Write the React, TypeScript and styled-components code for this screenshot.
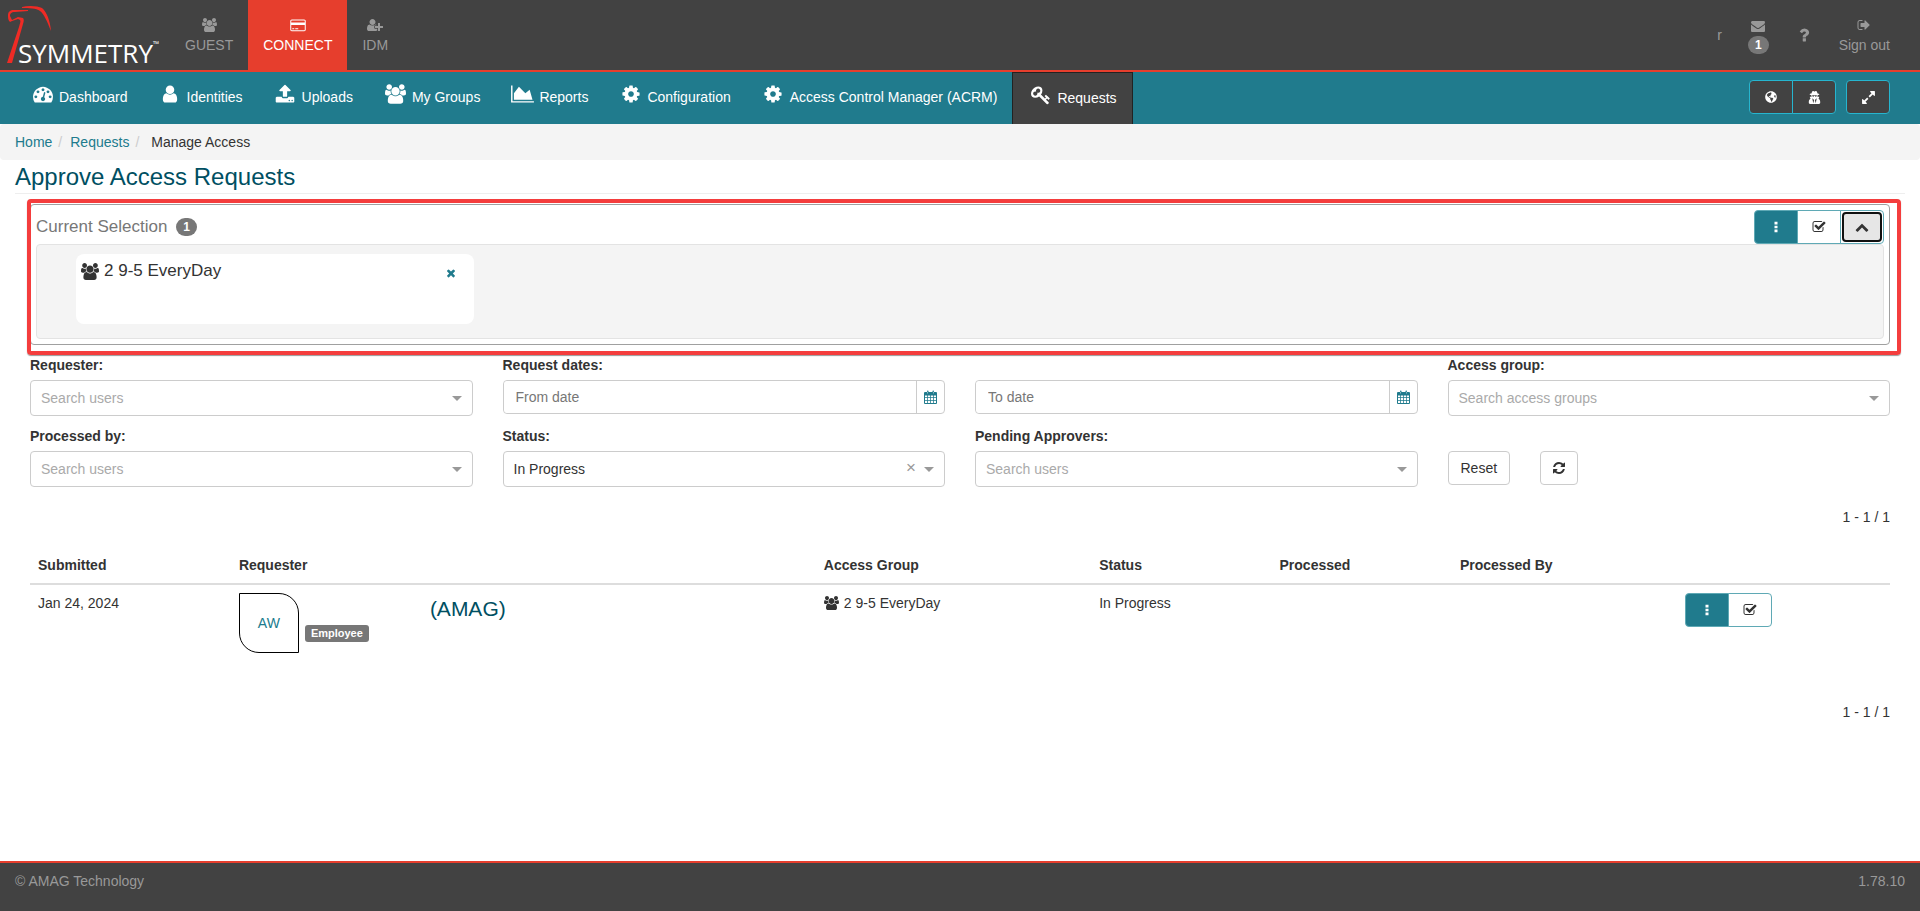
import React from "react";
import styled, { createGlobalStyle, css } from "styled-components";
import { FaUserSecret, FaGlobeAmericas } from "react-icons/fa";

const color = {
  dark: "#424242",
  teal: "#207b8d",
  tealLine: "#26b5cf",
  heading: "#004f62",
  red: "#e63e2d",
  text: "#333333",
  muted: "#999999",
  badge: "#777777",
  line: "#cccccc",
  pale: "#f4f4f4",
};

const GlobalStyle = createGlobalStyle`
  *, *::before, *::after { box-sizing: border-box; }
  body { margin: 0; background: #fff; }
  body, button, input, select { font-family: "Liberation Sans", Arial, sans-serif; font-size: 14px; line-height: 20px; color: ${color.text}; }
  a { color: ${color.teal}; text-decoration: none; }
`;

/* ---------- icons ---------- */

const glyphs = {
  users: [1920, "M593 896q-162 5-265 128h-134q-82 0-138-40.5t-56-118.5q0-353 124-353 6 0 43.5 21t97.5 42.5 119 21.5q67 0 133-23-5 37-5 66 0 139 81 256zm1071 637q0 120-73 189.5t-194 69.5h-874q-121 0-194-69.5t-73-189.5q0-53 3.5-103.5t14-109 26.5-108.5 43-97.5 62-81 85.5-53.5 111.5-20q10 0 43 21.5t73 48 107 48 135 21.5 135-21.5 107-48 73-48 43-21.5q61 0 111.5 20t85.5 53.5 62 81 43 97.5 26.5 108.5 14 109 3.5 103.5zm-1024-1277q0 106-75 181t-181 75-181-75-75-181 75-181 181-75 181 75 75 181zm704 384q0 159-112.5 271.5t-271.5 112.5-271.5-112.5-112.5-271.5 112.5-271.5 271.5-112.5 271.5 112.5 112.5 271.5zm576 225q0 78-56 118.5t-138 40.5h-134q-103-123-265-128 81-117 81-256 0-29-5-66 66 23 133 23 59 0 119-21.5t97.5-42.5 43.5-21q124 0 124 353zm-128-609q0 106-75 181t-181 75-181-75-75-181 75-181 181-75 181 75 75 181z"],
  gauge: [1792, "M384 1152q0-53-37.5-90.5t-90.5-37.5-90.5 37.5-37.5 90.5 37.5 90.5 90.5 37.5 90.5-37.5 37.5-90.5zm192-448q0-53-37.5-90.5t-90.5-37.5-90.5 37.5-37.5 90.5 37.5 90.5 90.5 37.5 90.5-37.5 37.5-90.5zm428 481l101-382q6-26-7.5-48.5t-38.5-29.5-48 6.5-30 39.5l-101 382q-60 5-107 43.5t-63 98.5q-20 77 20 146t117 89 146-20 89-117q16-60-6-117t-72-91zm660-33q0-53-37.5-90.5t-90.5-37.5-90.5 37.5-37.5 90.5 37.5 90.5 90.5 37.5 90.5-37.5 37.5-90.5zm-640-640q0-53-37.5-90.5t-90.5-37.5-90.5 37.5-37.5 90.5 37.5 90.5 90.5 37.5 90.5-37.5 37.5-90.5zm448 192q0-53-37.5-90.5t-90.5-37.5-90.5 37.5-37.5 90.5 37.5 90.5 90.5 37.5 90.5-37.5 37.5-90.5zm320 448q0 261-141 483-19 29-54 29h-1402q-35 0-54-29-141-221-141-483 0-182 71-348t191-286 286-191 348-71 348 71 286 191 191 286 71 348z"],
  user: [1792, "M1536 1399q0 109-62.5 187t-150.5 78h-854q-88 0-150.5-78t-62.5-187q0-85 8.5-160.5t31.5-152 58.5-131 94-89 134.5-34.5q131 128 313 128t313-128q76 0 134.5 34.5t94 89 58.5 131 31.5 152 8.5 160.5zm-256-887q0 159-112.5 271.5t-271.5 112.5-271.5-112.5-112.5-271.5 112.5-271.5 271.5-112.5 271.5 112.5 112.5 271.5z"],
  userPlus: [2048, "M704 896q-159 0-271.500-112.500t-112.500-271.500 112.500-271.500 271.500-112.500 271.500 112.500 112.500 271.500-112.500 271.500-271.500 112.500zm960 128h352q13 0 22.500 9.500t9.500 22.500v192q0 13-9.500 22.500t-22.500 9.500h-352v352q0 13-9.500 22.500t-22.500 9.500h-192q-13 0-22.500-9.500t-9.500-22.500v-352h-352q-13 0-22.500-9.500t-9.500-22.500v-192q0-13 9.500-22.500t22.500-9.500h352v-352q0-13 9.500-22.500t22.500-9.500h192q13 0 22.500 9.500t9.500 22.500v352zm-736 224q0 52 38 90t90 38h256v238q-68 50-171 50h-874q-121 0-194-69t-73-190q0-53 3.500-103.500t14-109 26.500-108.500 43-97.500 62-81 85.500-53.500 111.500-20q19 0 39 17 79 61 154.500 91.500t164.500 30.500 164.500-30.500 154.500-91.500q20-17 39-17 132 0 217 96h-223q-52 0-90 38t-38 90v192z"],
  card: [2048, "M224 192h1600q80 0 136 56t56 136v1120q0 80-56 136t-136 56h-1600q-80 0-136-56t-56-136v-1120q0-80 56-136t136-56zm-64 192v192h1728v-192q0-64-64-64h-1600q-64 0-64 64zm0 512v608q0 64 64 64h1600q64 0 64-64v-608zm128 416h256v128h-256zm384 0h384v128h-384z"],
  upload: [1792, "M1344 1472q0-26-19-45t-45-19-45 19-19 45 19 45 45 19 45-19 19-45zm256 0q0-26-19-45t-45-19-45 19-19 45 19 45 45 19 45-19 19-45zm128-224v320q0 40-28 68t-68 28h-1472q-40 0-68-28t-28-68v-320q0-40 28-68t68-28h427q21 56 70.5 92t110.5 36h256q61 0 110.5-36t70.5-92h427q40 0 68 28t28 68zm-325-648q-17 40-59 40h-256v448q0 26-19 45t-45 19h-256q-26 0-45-19t-19-45v-448h-256q-42 0-59-40-17-39 14-69l448-448q18-19 45-19t45 19l448 448q31 30 14 69z"],
  area: [2048, "M2048 1536v128h-2048v-1536h128v1408h1920zm-384-1024l256 896h-1664v-576l448-576 576 576z"],
  cog: [1792, "M1152 896q0-106-75-181t-181-75-181 75-75 181 75 181 181 75 181-75 75-181zm512-109v222q0 12-8 23t-20 13l-185 28q-19 54-39 91 35 50 107 138 10 12 10 25t-9 23q-27 37-99 108t-94 71q-12 0-26-9l-138-108q-44 23-91 38-16 136-29 186-7 28-36 28h-222q-14 0-24.5-8.5t-11.5-21.5l-28-184q-49-16-90-37l-141 107q-10 9-25 9-14 0-25-11-126-114-165-168-7-10-7-23 0-12 8-23 15-21 51-66.5t54-70.5q-27-50-41-99l-183-27q-13-2-21-12.5t-8-23.5v-222q0-12 8-23t19-13l186-28q14-46 39-92-40-57-107-138-10-12-10-24 0-10 9-23 26-36 98.5-107.5t94.5-71.5q13 0 26 10l138 107q44-23 91-38 16-136 29-186 7-28 36-28h222q14 0 24.5 8.5t11.5 21.5l28 184q49 16 90 37l142-107q9-9 24-9 13 0 25 10 129 119 165 170 7 8 7 22 0 12-8 23-15 21-51 66.5t-54 70.5q26 50 41 98l183 28q13 2 21 12.5t8 23.5z"],
  key: [1792, "M832 512q0-80-56-136t-136-56-136 56-56 136q0 42 19 83-41-19-83-19-80 0-136 56t-56 136 56 136 136 56 136-56 56-136q0-42-19-83 41 19 83 19 80 0 136-56t56-136zm851 704q0 17-49 66t-66 49q-9 0-28.5-16t-36.5-33-38.5-40-24.5-26l-96 96 220 220q28 28 28 68 0 42-39 81t-81 39q-40 0-68-28l-671-671q-176 131-365 131-163 0-265.5-102.5t-102.5-265.5q0-160 95-313t248-248 313-95q163 0 265.5 102.5t102.5 265.5q0 189-131 365l355 355 96-96q-3-3-26-24.5t-40-38.5-33-36.5-16-28.5q0-17 49-66t66-49q13 0 23 10 6 6 46 44.5t82 79.5 86.5 86 73 78 28.5 41z"],
  envelope: [1792, "M1792 710v794q0 66-47 113t-113 47h-1472q-66 0-113-47t-47-113v-794q44 49 101 87 362 246 497 345 57 42 92.5 65.5t94.5 48 110 24.5h2q51 0 110-24.5t94.5-48 92.5-65.5q170-123 498-345 57-39 100-87zm0-294q0 79-49 151t-122 123q-376 261-468 325-10 7-42.5 30.5t-54 38-52 32.5-57.5 27-50 9h-2q-23 0-50-9t-57.5-27-52-32.5-54-38-42.5-30.500q-91-64-262-182.500t-205-142.500q-62-42-117-115.500t-55-136.500q0-78 41.500-130t118.500-52h1472q65 0 112.500 47t47.500 113z"],
  question: [1792, "M1088 1256v240q0 16-12 28t-28 12h-240q-16 0-28-12t-12-28v-240q0-16 12-28t28-12h240q16 0 28 12t12 28zm316-600q0 54-15.5 101t-35 76.5-55 59.5-57.5 43.5-61 35.5q-41 23-68.5 65t-27.5 67q0 17-12 32.5t-28 15.5h-240q-15 0-25.5-18.5t-10.5-37.5v-45q0-83 65-156.5t143-108.5q59-27 84-56t25-76q0-42-46.5-74t-107.5-32q-65 0-108 29-35 25-107 115-13 16-31 16-12 0-25-8l-164-125q-13-10-15.5-25t5.5-28q160-266 464-266 80 0 161 31t146 83 106 127.5 41 158.5z"],
  signOut: [1792, "M704 1440q0 4 1 20t.5 26.5-3 23.5-10 19.5-20.5 6.5h-320q-119 0-203.5-84.500t-84.500-203.500v-704q0-119 84.500-203.500t203.500-84.500h320q13 0 22.500 9.500t9.500 22.500q0 4 1 20t.5 26.5-3 23.5-10 19.5-20.5 6.5h-320q-66 0-113 47t-47 113v704q0 66 47 113t113 47h312l11.5 1 11.5 3 8 5.5 7 9 2 13.500zm928-544q0 26-19 45l-544 544q-19 19-45 19t-45-19-19-45v-288h-448q-26 0-45-19t-19-45v-384q0-26 19-45t45-19h448v-288q0-26 19-45t45-19 45 19l544 544q19 19 19 45z"],
  check: [1792, "M1472 930v318q0 119-84.5 203.5t-203.5 84.5h-832q-119 0-203.5-84.5t-84.5-203.5v-832q0-119 84.5-203.5t203.5-84.5h832q63 0 117 25 15 7 18 23 3 17-9 29l-49 49q-10 10-23 10-3 0-9-2-23-6-45-6h-832q-66 0-113 47t-47 113v832q0 66 47 113t113 47h832q66 0 113-47t47-113v-254q0-13 9-22l64-64q10-10 23-10 6 0 12 3 20 8 20 29zm231-489l-814 814q-24 24-57 24t-57-24l-430-430q-24-24-24-57t24-57l110-110q24-24 57-24t57 24l263 263 647-647q24-24 57-24t57 24l110 110q24 24 24 57t-24 57z"],
  refresh: [1792, "M1639 1056q0 5-1 7-64 268-268 434.5t-478 166.5q-146 0-282.5-55t-243.5-157l-129 129q-19 19-45 19t-45-19-19-45v-448q0-26 19-45t45-19h448q26 0 45 19t19 45-19 45l-137 137q71 66 161 102t187 36q134 0 250-65t186-179q11-17 53-117 8-23 30-23h192q13 0 22.5 9.5t9.5 22.5zm25-800v448q0 26-19 45t-45 19h-448q-26 0-45-19t-19-45 19-45l138-138q-148-137-349-137-134 0-250 65t-186 179q-11 17-53 117-8 23-30 23h-199q-13 0-22.5-9.5t-9.5-22.5v-7q65-268 270-434.5t480-166.5q146 0 284 55.5t245 156.5l130-129q19-19 45-19t45 19 19 45z"],
  times: [1792, "M1490 1322q0 40-28 68l-136 136q-28 28-68 28t-68-28l-294-294-294 294q-28 28-68 28t-68-28l-136-136q-28-28-28-68t28-68l294-294-294-294q-28-28-28-68t28-68l136-136q28-28 68-28t68 28l294 294 294-294q28-28 68-28t68 28l136 136q28 28 28 68t-28 68l-294 294 294 294q28 28 28 68z"],
  up: [1792, "M1683 1331l-166 165q-19 19-45 19t-45-19l-531-531-531 531q-19 19-45 19t-45-19l-166-165q-19-19-19-45.5t19-45.500l742-741q19-19 45-19t45 19l742 741q19 19 19 45.500t-19 45.500z"],
  expand: [1792, "M883 1056q0 13-10 23l-332 332 144 144q19 19 19 45t-19 45-45 19h-448q-26 0-45-19t-19-45v-448q0-26 19-45t45-19 45 19l144 144 332-332q10-10 23-10t23 10l114 114q10 10 10 23zm781-864v448q0 26-19 45t-45 19-45-19l-144-144-332 332q-10 10-23 10t-23-10l-114-114q-10-10-10-23t10-23l332-332-144-144q-19-19-19-45t19-45 45-19h448q26 0 45 19t19 45z"],
  dots: [1792, "M672 128h448v384h-448zM672 704h448v384h-448zM672 1280h448v384h-448z"],
  calendar: [1664, "M128 256h256v-96q0-96 96-96t96 96v96h512v-96q0-96 96-96t96 96v96h256q128 0 128 128v1280q0 128-128 128h-1408q-128 0-128-128v-1280q0-128 128-128zM128 704v224h288v-224zM512 704v224h288v-224zM896 704v224h288v-224zM1280 704v224h256v-224zM128 1024v256h288v-256zM512 1024v256h288v-256zM896 1024v256h288v-256zM1280 1024v256h256v-256zM128 1376v288h288v-288zM512 1376v288h288v-288zM896 1376v288h288v-288zM1280 1376v288h256v-288zM448 224v224h64v-224zM1152 224v224h64v-224z"],
} as const;

type GlyphName = keyof typeof glyphs;

const Svg = styled.svg`
  display: block;
  flex: none;
  fill: currentColor;
`;

function Icon({ name, size = 14 }: { name: GlyphName; size?: number }) {
  const [w, d] = glyphs[name];
  return (
    <Svg aria-hidden="true" width={Math.round((w * size) / 1792)} height={size} viewBox={`0 0 ${w} 1792`}>
      <path fillRule="evenodd" d={d} />
    </Svg>
  );
}

/* ---------- header ---------- */

const Page = styled.div`
  min-height: 100vh;
  display: flex;
  flex-direction: column;
`;

const TopBar = styled.header`
  display: flex;
  justify-content: space-between;
  height: 72px;
  background: ${color.dark};
  border-bottom: 2px solid ${color.red};
`;

const TopGroup = styled.div`
  display: flex;
  &:last-child { padding-right: 15px; }
`;

const Logo = styled.a`
  width: 170px;
  height: 70px;
`;

const TopLink = styled.a<{ $active?: boolean; $tight?: boolean }>`
  display: flex;
  flex-direction: column;
  justify-content: center;
  align-items: center;
  padding: 0 ${(p) => (p.$tight ? 11 : 15)}px;
  color: ${(p) => (p.$active ? "#fff" : color.muted)};
  background: ${(p) => (p.$active ? color.red : "transparent")};
`;

const IconLine = styled.span`
  display: flex;
  align-items: center;
  height: 20px;
`;

const Badge = styled.span`
  min-width: 20px;
  padding: 3px 7px;
  border-radius: 10px;
  background: ${color.badge};
  color: #fff;
  font-size: 12px;
  font-weight: bold;
  line-height: 12px;
`;

const NavBar = styled.nav`
  display: flex;
  justify-content: space-between;
  align-items: flex-start;
  height: 52px;
  padding: 0 30px 0 15px;
  background: ${color.teal};
`;

const NavList = styled.div`
  display: flex;
`;

const NavLink = styled.a<{ $active?: boolean }>`
  display: flex;
  gap: 4px;
  height: 52px;
  padding: 15px 15px 0;
  color: #fff;
  ${(p) => p.$active && css`
    background: ${color.dark};
    border: 1px solid #222;
    border-bottom: 0;
  `}
`;

const NavIcon = styled.span`
  display: flex;
  justify-content: center;
  width: 25px;
  height: 20px;
  margin-top: -3px;
`;

const NavTools = styled.div`
  display: flex;
  gap: 10px;
  padding-top: 8px;
`;

const ButtonGroup = styled.div`
  display: flex;
`;

const ToolButton = styled.button<{ $tone?: "dark" | "teal" | "light" }>`
  display: flex;
  justify-content: center;
  align-items: center;
  width: 44px;
  height: 34px;
  padding: 0;
  border: 1px solid ${(p) => (p.$tone === "dark" ? color.tealLine : "#5fa9b5")};
  background: ${(p) => (p.$tone === "dark" ? color.dark : p.$tone === "teal" ? color.teal : "#fff")};
  color: ${(p) => (p.$tone === "light" ? color.text : "#fff")};
  &:first-child { border-top-left-radius: 4px; border-bottom-left-radius: 4px; }
  &:last-child { border-top-right-radius: 4px; border-bottom-right-radius: 4px; }
  & + & { margin-left: -1px; }
`;

const FocusFrame = styled.span`
  display: flex;
  justify-content: center;
  align-items: center;
  width: 40px;
  height: 30px;
  border: 2px solid #101010;
  border-radius: 4px;
  background: #e6e6e6;
`;

/* ---------- content ---------- */

const Breadcrumb = styled.nav`
  display: flex;
  height: 36px;
  padding: 8px 15px;
  border-radius: 4px;
  background: ${color.pale};
`;

const Slash = styled.span`
  padding: 0 8px 0 6px;
  color: ${color.line};
`;

const Current = styled.span`
  padding-left: 4px;
`;

const Main = styled.main`
  flex: 1;
  padding: 0 15px;
`;

const Title = styled.h1`
  height: 34px;
  margin: 0 0 10px;
  border-bottom: 1px solid #eee;
  color: ${color.heading};
  font-size: 24px;
  font-weight: normal;
  line-height: 33px;
`;

const Content = styled.div`
  padding: 0 15px;
`;

const Panel = styled.section`
  position: relative;
  padding: 5px;
  border: 1px solid #a0a0a0;
  border-radius: 4px;
  &::after {
    content: "";
    position: absolute;
    inset: -6px -12px -11px -4px;
    border: 4px solid #f43d3d;
    border-radius: 4px;
    box-shadow: 0 1px 1px rgba(0, 0, 0, 0.4);
    pointer-events: none;
  }
`;

const PanelHead = styled.div`
  display: flex;
  justify-content: space-between;
  align-items: center;
  height: 34px;
`;

const PanelTitle = styled.h2`
  display: flex;
  align-items: center;
  gap: 9px;
  margin: 0;
  color: ${color.badge};
  font-size: 17px;
  font-weight: normal;
`;

const Well = styled.div`
  height: 95px;
  padding: 9px 39px;
  border: 1px solid #e3e3e3;
  border-radius: 4px;
  background: ${color.pale};
`;

const SelectedCard = styled.div`
  display: flex;
  justify-content: space-between;
  align-items: flex-start;
  width: 22.5%;
  height: 70px;
  padding: 7px 17px 7px 5px;
  border-radius: 8px;
  background: #fff;
  font-size: 17px;
`;

const IconText = styled.span`
  display: flex;
  align-items: center;
  gap: 5px;
`;

const PlainButton = styled.button`
  display: flex;
  align-items: center;
  height: 24px;
  padding: 0;
  border: 0;
  background: none;
  color: ${color.teal};
`;

const Filters = styled.form`
  display: grid;
  grid-template-columns: repeat(4, 1fr);
  gap: 10px 30px;
  padding-top: 10px;
`;

const Field = styled.div`
  display: flex;
  flex-direction: column;
  justify-content: flex-end;
  height: 61px;
`;

const DateField = styled(Field)`
  justify-content: flex-start;
`;

const Label = styled.label`
  height: 20px;
  margin-bottom: 5px;
  font-weight: bold;
`;

const SelectBox = styled.div`
  position: relative;
  display: flex;
`;

const Select = styled.select<{ $filled?: boolean }>`
  appearance: none;
  width: 100%;
  height: 36px;
  padding: 0 40px 0 10px;
  border: 1px solid ${color.line};
  border-radius: 4px;
  background: #fff;
  color: ${(p) => (p.$filled ? color.text : "#aaa")};
`;

const Caret = styled.span`
  position: absolute;
  top: 16px;
  right: 11px;
  border: 5px solid transparent;
  border-top-color: ${color.muted};
  border-bottom: 0;
  pointer-events: none;
`;

const Clear = styled.button`
  position: absolute;
  top: 7px;
  right: 29px;
  padding: 0;
  border: 0;
  background: none;
  color: ${color.muted};
  font-size: 17px;
`;

const InputGroup = styled.div`
  display: flex;
  height: 34px;
  border: 1px solid ${color.line};
  border-radius: 4px;
`;

const DateInput = styled.input`
  flex: 1;
  min-width: 0;
  padding: 0 12px;
  border: 0;
  border-radius: 4px;
  &::placeholder { color: ${color.badge}; }
`;

const CalendarButton = styled.button`
  display: flex;
  justify-content: center;
  align-items: center;
  width: 28px;
  padding: 0;
  border: 0;
  border-left: 1px solid ${color.line};
  background: none;
  color: ${color.teal};
`;

const FormButtons = styled.div`
  display: flex;
  gap: 30px;
  padding-top: 25px;
`;

const FormButton = styled.button<{ $icon?: boolean }>`
  display: flex;
  align-items: center;
  height: 34px;
  padding: 0 ${(p) => (p.$icon ? 11 : 12)}px;
  border: 1px solid ${color.line};
  border-radius: 4px;
  background: #fff;
`;

const Pager = styled.div`
  text-align: right;
`;

const PagerTop = styled(Pager)`
  padding: 20px 0 19px;
`;

const PagerBottom = styled(Pager)`
  padding-top: 41px;
`;

const Table = styled.table`
  width: 100%;
  table-layout: fixed;
  border-collapse: collapse;
`;

const Th = styled.th<{ $width: string }>`
  width: ${(p) => p.$width};
  height: 38px;
  padding: 8px;
  border-bottom: 2px solid #ddd;
  text-align: left;
`;

const Td = styled.td`
  height: 76px;
  padding: 8px;
  vertical-align: top;
`;

const Person = styled.div`
  display: flex;
  gap: 6px;
`;

const Avatar = styled.a`
  display: flex;
  justify-content: center;
  align-items: center;
  width: 60px;
  height: 60px;
  border: 1px solid #000;
  border-radius: 0 20px 0 20px;
`;

const PersonInfo = styled.div`
  flex: 1;
  display: flex;
  flex-direction: column;
  align-items: flex-start;
  gap: 4px;
`;

const PersonName = styled.a`
  padding: 4px 0 0 125px;
  color: ${color.heading};
  font-size: 21px;
  line-height: 24px;
`;

const Tag = styled.span`
  padding: 3px 6px;
  border-radius: 3px;
  background: ${color.badge};
  color: #fff;
  font-size: 11px;
  font-weight: bold;
  line-height: 11px;
`;

const Footer = styled.footer`
  display: flex;
  justify-content: space-between;
  height: 50px;
  padding: 8px 15px;
  border-top: 2px solid ${color.red};
  background: ${color.dark};
  color: ${color.muted};
`;

const navItems: { icon: GlyphName; label: string; active?: boolean }[] = [
  { icon: "gauge", label: "Dashboard" },
  { icon: "user", label: "Identities" },
  { icon: "upload", label: "Uploads" },
  { icon: "users", label: "My Groups" },
  { icon: "area", label: "Reports" },
  { icon: "cog", label: "Configuration" },
  { icon: "cog", label: "Access Control Manager (ACRM)" },
  { icon: "key", label: "Requests", active: true },
];

const columns: [string, string][] = [
  ["Submitted", "10.8%"],
  ["Requester", "31.45%"],
  ["Access Group", "14.8%"],
  ["Status", "9.7%"],
  ["Processed", "9.7%"],
  ["Processed By", "12.1%"],
  ["", "11.45%"],
];

function SelectField({ id, label, text, filled }: { id: string; label: string; text: string; filled?: boolean }) {
  return (
    <Field>
      <Label htmlFor={id}>{label}</Label>
      <SelectBox>
        <Select id={id} $filled={filled}>
          <option>{text}</option>
        </Select>
        {filled && <Clear type="button" aria-label="Clear">×</Clear>}
        <Caret />
      </SelectBox>
    </Field>
  );
}

function DatePicker({ id, label, placeholder }: { id: string; label?: string; placeholder: string }) {
  return (
    <DateField>
      <Label htmlFor={id}>{label}</Label>
      <InputGroup>
        <DateInput id={id} placeholder={placeholder} aria-label={placeholder} />
        <CalendarButton type="button" aria-label="Open calendar"><Icon name="calendar" /></CalendarButton>
      </InputGroup>
    </DateField>
  );
}

function SymmetryLogo() {
  return (
    <svg width="170" height="70" viewBox="0 0 170 70" role="img" aria-label="Symmetry">
      <g fill="#ef2b25">
        <path d="M8 15C8 12 10 10 14 10L28 10L28 11L15 12C11 12 10 14 10 16L12 20L18 17L23 18C24 19 24 21 23 24L12 63L7 63L19 27C20 23 21 21 20 20L18 19L12 21L10 22C8 20 8 18 8 15Z" />
        <path d="M22 7C29 5 38 6 42 8C47 12 50 21 51 31C47 21 44 14 40 11C36 8 29 8 22 8Z" />
      </g>
      <text x="18" y="63" fill="#fff" fontFamily='"Open Sans", "Noto Sans", sans-serif' fontSize="26" fontWeight="500">SYMMETRY</text>
      <text x="153" y="47" fill="#fff" fontFamily='"Open Sans", sans-serif' fontSize="8">™</text>
    </svg>
  );
}

export default function App() {
  return (
    <Page>
      <GlobalStyle />
      <TopBar>
        <TopGroup>
          <Logo href="#"><SymmetryLogo /></Logo>
          <TopLink href="#"><IconLine><Icon name="users" /></IconLine>GUEST</TopLink>
          <TopLink href="#" $active><IconLine><Icon name="card" /></IconLine>CONNECT</TopLink>
          <TopLink href="#"><IconLine><Icon name="userPlus" /></IconLine>IDM</TopLink>
        </TopGroup>
        <TopGroup>
          <TopLink href="#" $tight>r</TopLink>
          <TopLink href="#"><IconLine><Icon name="envelope" /></IconLine><Badge>1</Badge></TopLink>
          <TopLink href="#" $tight aria-label="Help"><Icon name="question" size={18} /></TopLink>
          <TopLink href="#"><IconLine><Icon name="signOut" /></IconLine>Sign out</TopLink>
        </TopGroup>
      </TopBar>
      <NavBar>
        <NavList>
          {navItems.map((item) => (
            <NavLink key={item.label} href="#" $active={item.active}>
              <NavIcon><Icon name={item.icon} size={20} /></NavIcon>
              {item.label}
            </NavLink>
          ))}
        </NavList>
        <NavTools>
          <ButtonGroup>
            <ToolButton $tone="dark" aria-label="Language"><FaGlobeAmericas size={12} /></ToolButton>
            <ToolButton $tone="dark" aria-label="Impersonate"><FaUserSecret size={13} /></ToolButton>
          </ButtonGroup>
          <ButtonGroup>
            <ToolButton $tone="dark" aria-label="Expand"><Icon name="expand" size={15} /></ToolButton>
          </ButtonGroup>
        </NavTools>
      </NavBar>
      <Breadcrumb aria-label="Breadcrumb">
        <a href="#">Home</a><Slash>/</Slash>
        <a href="#">Requests</a><Slash>/</Slash>
        <Current>Manage Access</Current>
      </Breadcrumb>
      <Main>
        <Title>Approve Access Requests</Title>
        <Content>
          <Panel>
            <PanelHead>
              <PanelTitle>Current Selection <Badge>1</Badge></PanelTitle>
              <ButtonGroup>
                <ToolButton $tone="teal" aria-label="More"><Icon name="dots" size={12} /></ToolButton>
                <ToolButton $tone="light" aria-label="Approve"><Icon name="check" /></ToolButton>
                <ToolButton $tone="light" aria-label="Collapse"><FocusFrame><Icon name="up" /></FocusFrame></ToolButton>
              </ButtonGroup>
            </PanelHead>
            <Well>
              <SelectedCard>
                <IconText><Icon name="users" size={17} />2 9-5 EveryDay</IconText>
                <PlainButton aria-label="Remove"><Icon name="times" size={12} /></PlainButton>
              </SelectedCard>
            </Well>
          </Panel>
          <Filters>
            <SelectField id="requester" label="Requester:" text="Search users" />
            <DatePicker id="from" label="Request dates:" placeholder="From date" />
            <DatePicker id="to" placeholder="To date" />
            <SelectField id="group" label="Access group:" text="Search access groups" />
            <SelectField id="processed" label="Processed by:" text="Search users" />
            <SelectField id="status" label="Status:" text="In Progress" filled />
            <SelectField id="pending" label="Pending Approvers:" text="Search users" />
            <FormButtons>
              <FormButton type="button">Reset</FormButton>
              <FormButton type="button" $icon aria-label="Refresh"><Icon name="refresh" /></FormButton>
            </FormButtons>
          </Filters>
          <PagerTop>1 - 1 / 1</PagerTop>
          <Table>
            <thead>
              <tr>{columns.map(([name, width]) => <Th key={name} $width={width}>{name}</Th>)}</tr>
            </thead>
            <tbody>
              <tr>
                <Td>Jan 24, 2024</Td>
                <Td>
                  <Person>
                    <Avatar href="#">AW</Avatar>
                    <PersonInfo>
                      <PersonName href="#">(AMAG)</PersonName>
                      <Tag>Employee</Tag>
                    </PersonInfo>
                  </Person>
                </Td>
                <Td><IconText><Icon name="users" />2 9-5 EveryDay</IconText></Td>
                <Td>In Progress</Td>
                <Td />
                <Td />
                <Td>
                  <ButtonGroup>
                    <ToolButton $tone="teal" aria-label="More"><Icon name="dots" size={12} /></ToolButton>
                    <ToolButton $tone="light" aria-label="Approve"><Icon name="check" /></ToolButton>
                  </ButtonGroup>
                </Td>
              </tr>
            </tbody>
          </Table>
          <PagerBottom>1 - 1 / 1</PagerBottom>
        </Content>
      </Main>
      <Footer><span>© AMAG Technology</span><span>1.78.10</span></Footer>
    </Page>
  );
}
